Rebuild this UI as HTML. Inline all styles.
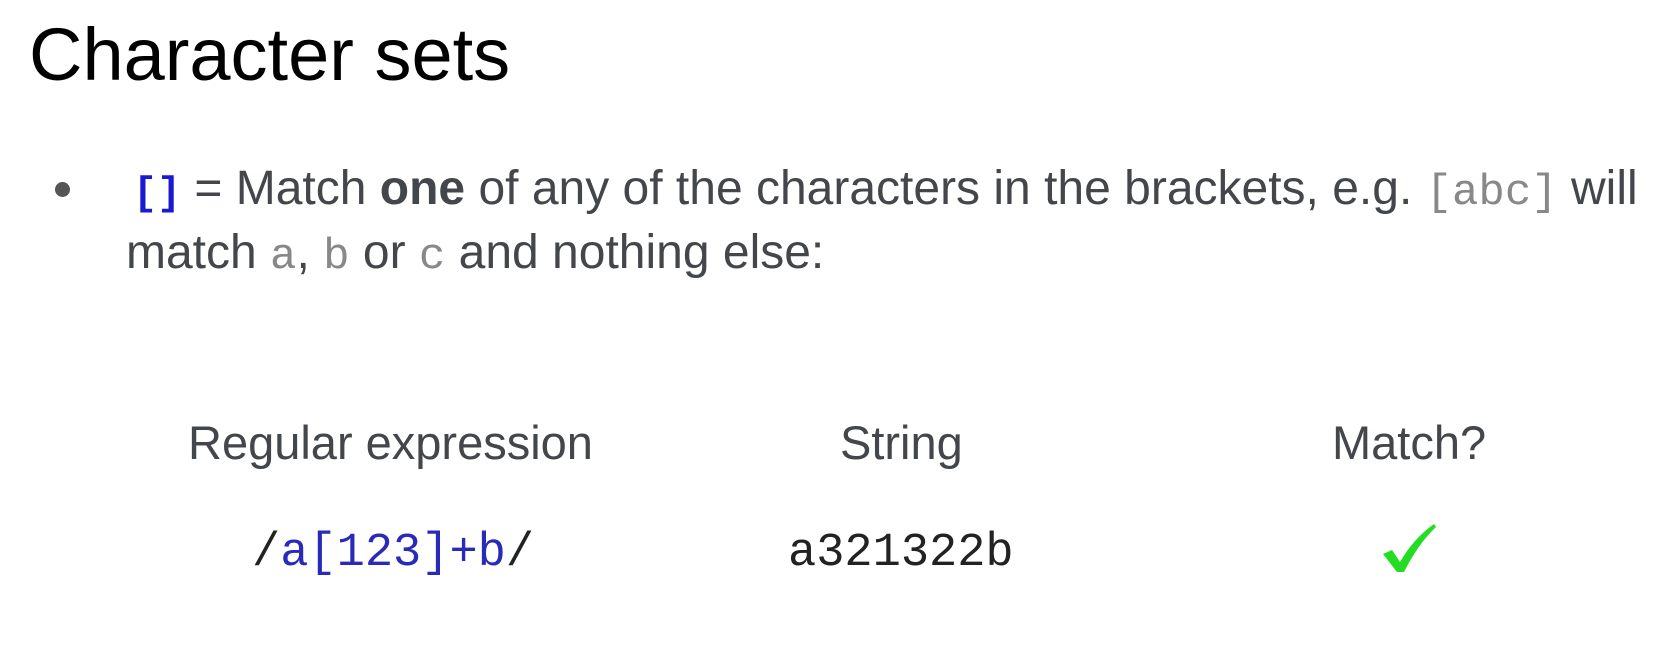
<!DOCTYPE html>
<html><head><style>
body{margin:0;width:1675px;height:652px;background:#fff;overflow:hidden;position:relative;font-family:"Liberation Sans",Arial,sans-serif}
.a{position:absolute;white-space:nowrap}
.t{left:29px;top:18px;font-size:74px;color:#000;line-height:1}
.p{font-size:48px;color:#43464b;line-height:1}
.m{font-family:"Liberation Mono",monospace;color:#888;font-size:44px}
.h{font-size:47px;color:#43464b;line-height:1}
.c{font-family:"Liberation Mono",monospace;font-size:47px;line-height:1}
</style></head><body>
<div class="a t">Character sets</div>
<div class="a" style="left:55px;top:182px;width:15px;height:15px;border-radius:50%;background:#555"></div>
<div class="a p" style="left:133px;top:165px"><b class="m" style="color:#1a1ad0;font-size:40px">[]</b> = Match <b>one</b> of any of the characters in the brackets, e.g. <span class="m">[abc]</span> will</div>
<div class="a p" style="left:126px;top:229px">match <span class="m">a</span>, <span class="m">b</span> or <span class="m">c</span> and nothing else:</div>
<div class="a h" style="left:188px;top:419px">Regular expression</div>
<div class="a h" style="left:840px;top:419px">String</div>
<div class="a h" style="left:1332px;top:419px">Match?</div>
<div class="a c" style="left:252px;top:530px;color:#222">/<span style="color:#2a2ab8">a[123]+b</span>/</div>
<div class="a c" style="left:788px;top:530px;color:#222">a321322b</div>
<svg class="a" style="left:1380px;top:522px" width="58" height="52" viewBox="0 0 58 52"><path d="M3 32 L12 28 L20 40 Q34 16 54 2 L56 5 Q38 22 24 50 L17 50 Z" fill="#22dd22"/></svg>
</body></html>
